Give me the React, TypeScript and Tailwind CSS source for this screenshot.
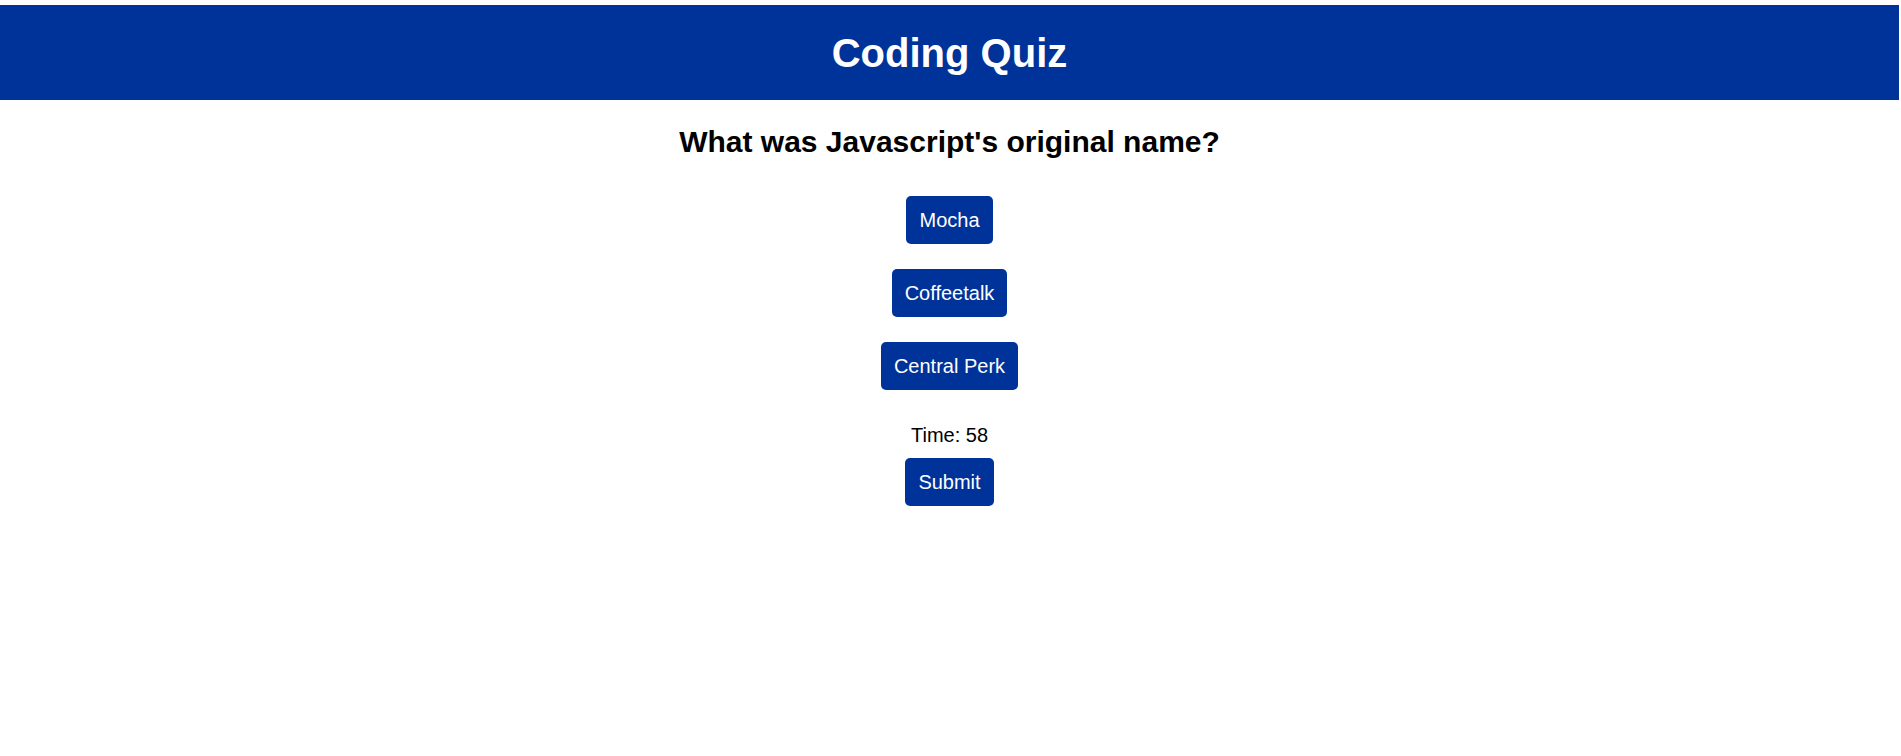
const answers = ["Mocha", "Coffeetalk", "Central Perk"];

const App = () => {
  return (
    <div className="w-[1899px] min-h-[756px] bg-white font-['Liberation_Sans',Arial,sans-serif] text-black">
      <header className="mt-[5px] h-[95px] bg-[#003399] flex items-center justify-center">
        <h1 className="text-[40px] leading-[46px] font-bold text-white">Coding Quiz</h1>
      </header>

      <main className="flex flex-col items-center">
        <h2 className="mt-[24px] text-[30px] leading-[35px] font-bold">
          What was Javascript's original name?
        </h2>

        <div className="mt-[37px] flex flex-col items-center gap-[25px]">
          {answers.map((answer) => (
            <button
              key={answer}
              className="bg-[#003399] text-white text-[20px] leading-[24px] px-[13px] py-3 rounded-[5px]"
            >
              {answer}
            </button>
          ))}
        </div>

        <p className="mt-[34px] text-[20px] leading-[23px]">Time: 58</p>

        <button className="mt-[11px] bg-[#003399] text-white text-[20px] leading-[24px] px-[13px] py-3 rounded-[5px]">
          Submit
        </button>
      </main>
    </div>
  );
};

export default App;
